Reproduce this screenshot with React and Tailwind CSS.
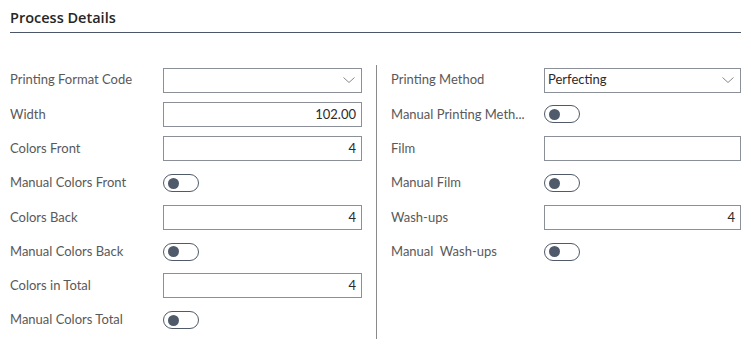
function Chevron() {
  return (
    <svg width="12" height="6" viewBox="0 0 12 6" fill="none" className="shrink-0">
      <path d="M0.5 0.5 L6 5.5 L11.5 0.5" stroke="#8a8886" strokeWidth="1" />
    </svg>
  )
}

function Toggle() {
  return (
    <div className="flex h-[18px] w-[36px] items-center rounded-full border border-[#505a68] pl-[4px]">
      <div className="h-[11px] w-[11px] rounded-full bg-[#4f5a6b]" />
    </div>
  )
}

function Field({ label, type, value }) {
  return (
    <div className="flex h-[34.3px] items-center">
      <div className="w-[153px] shrink-0 truncate whitespace-pre pr-2 text-[13px] text-[#595959]">{label}</div>
      {type === 'toggle' && <Toggle />}
      {type === 'text' && (
        <div className="flex h-[25px] flex-1 items-center justify-end border border-[#8a8f98] bg-white px-[5px] text-[13px] text-[#2b2b2b]">
          {value}
        </div>
      )}
      {type === 'select' && (
        <div className="flex h-[25px] flex-1 items-center justify-between border border-[#8a8f98] bg-white pl-[3px] pr-[6px] text-[13px] text-[#2b2b2b]">
          <span>{value}</span>
          <Chevron />
        </div>
      )}
    </div>
  )
}

const left = [
  { label: 'Printing Format Code', type: 'select', value: '' },
  { label: 'Width', type: 'text', value: '102.00' },
  { label: 'Colors Front', type: 'text', value: '4' },
  { label: 'Manual Colors Front', type: 'toggle' },
  { label: 'Colors Back', type: 'text', value: '4' },
  { label: 'Manual Colors Back', type: 'toggle' },
  { label: 'Colors in Total', type: 'text', value: '4' },
  { label: 'Manual Colors Total', type: 'toggle' },
]

const right = [
  { label: 'Printing Method', type: 'select', value: 'Perfecting' },
  { label: 'Manual Printing Meth...', type: 'toggle' },
  { label: 'Film', type: 'text', value: '' },
  { label: 'Manual Film', type: 'toggle' },
  { label: 'Wash-ups', type: 'text', value: '4' },
  { label: 'Manual  Wash-ups', type: 'toggle' },
]

export default function App() {
  return (
    <div
      className="h-[351px] w-[751px] bg-white px-[10px] pt-[7px]"
      style={{ fontFamily: 'Lato, "Open Sans", sans-serif' }}
    >
      <div className="border-b border-[#4b5668] pb-[3px]">
        <h2 className="font-['Open_Sans',sans-serif] text-[14.5px] font-semibold leading-[22px] text-[#262626]">
          Process Details
        </h2>
      </div>
      <div className="mt-[30px] flex">
        <div className="w-[352px]">
          {left.map((f) => (
            <Field key={f.label} {...f} />
          ))}
        </div>
        <div className="mx-[14px] mt-[2px] h-[274px] w-px bg-[#8a8a8a]" />
        <div className="flex-1">
          {right.map((f) => (
            <Field key={f.label} {...f} />
          ))}
        </div>
      </div>
    </div>
  )
}
